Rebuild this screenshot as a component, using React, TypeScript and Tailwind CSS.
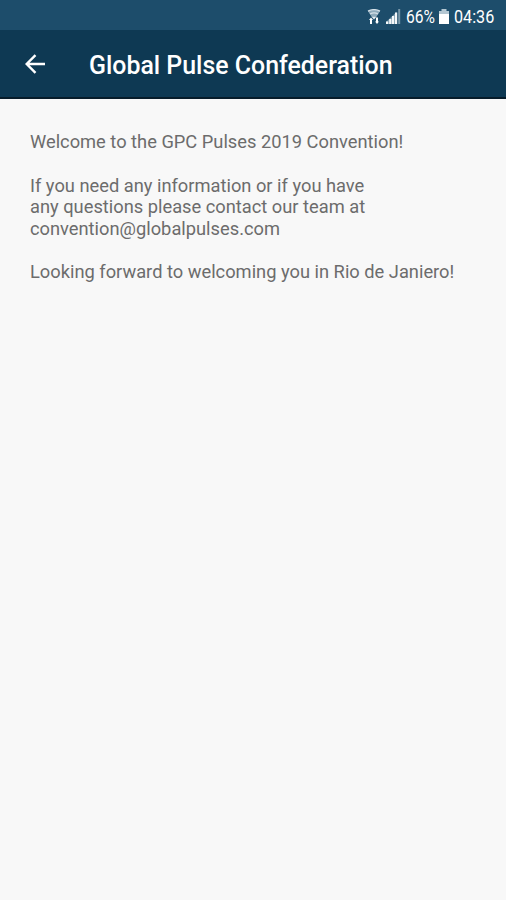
import React from 'react';

const paragraphs = [
    ['Welcome to the GPC Pulses 2019 Convention!'],
    [
        'If you need any information or if you have',
        'any questions please contact our team at',
        'convention@globalpulses.com',
    ],
    ['Looking forward to welcoming you in Rio de Janiero!'],
];

function WifiIcon() {
    return (
        <svg width="14" height="16" viewBox="0 0 14 16" fill="none">
            <path d="M1 2.2C4.5.4 9.5.4 13 2.2L9.5 7.5h-5Z" fill="#8fabbc" />
            <path d="M1 2.2C4.5.4 9.5.4 13 2.2M3 5c2.4-1.3 5.6-1.3 8 0" stroke="#d5e1e9" strokeWidth="1.4" />
            <path d="M4.4 7.5h5.2L7 10.5Z" fill="#e6eef3" />
            <path d="M2 11 4 8.5 6 11H5v4H3v-4ZM8 12.5 10 15l2-2.5h-1v-4H9v4Z" fill="#fff" />
        </svg>
    );
}

function SignalIcon() {
    return (
        <svg width="15" height="15" viewBox="0 0 15 15">
            <path d="M0 15v-2L10.5 3v12z" fill="#7898aa" />
            <path d="M0 12.5h2.2V15H0zM3.2 10h2.2v5H3.2zM6 7h2.2v8H6zM9 3.5h2.2V15H9z" fill="#f4f7f9" />
            <path d="M12.2 0h2v15h-2z" fill="#7898aa" />
        </svg>
    );
}

function BatteryIcon() {
    return (
        <svg width="10" height="15" viewBox="0 0 10 15">
            <path d="M2.5 0h5v2H10v3H0V2h2.5z" fill="#b4c7d2" />
            <path d="M0 5h10v10H0z" fill="#fff" />
        </svg>
    );
}

function StatusBar() {
    return (
        <div className="flex h-[30px] items-center justify-end bg-[#1d4d6b] pt-[3px] pr-[12px] text-[19px] text-white">
            <WifiIcon />
            <div className="ml-[5px]">
                <SignalIcon />
            </div>
            <span className="ml-[5px] w-[30px] pt-px whitespace-nowrap">
                <span className="inline-block origin-left scale-x-[0.82]">66%</span>
            </span>
            <div className="ml-[3px]">
                <BatteryIcon />
            </div>
            <span className="ml-[5px] w-[40px] pt-px whitespace-nowrap">
                <span className="inline-block origin-left scale-x-[0.85]">04:36</span>
            </span>
        </div>
    );
}

function TopBar() {
    return (
        <header className="flex h-[69px] items-center border-b-2 border-[#071c2a] bg-[#0e3953] pl-[25px] text-white">
            <button type="button" aria-label="Back">
                <svg width="21" height="20" viewBox="0 0 21 20" fill="none" stroke="currentColor" strokeWidth="2.4">
                    <path d="M20 10H2M10.5 1.2 1.7 10l8.8 8.8" />
                </svg>
            </button>
            <h1 className="ml-[43px] pt-1 text-[24.9px] leading-[30px] font-medium whitespace-nowrap">
                Global Pulse Confederation
            </h1>
        </header>
    );
}

export default function App() {
    return (
        <div className="flex h-screen flex-col overflow-hidden bg-[#f8f8f8] font-[Roboto,sans-serif]">
            <StatusBar />
            <TopBar />
            <main className="flex flex-1 flex-col gap-[21.6px] px-[30px] pt-[32.4px] text-[18.3px] leading-[21.6px] text-[#6c6c6c]">
                {paragraphs.map((lines) => (
                    <p key={lines[0]}>
                        {lines.map((line) => (
                            <span key={line} className="block whitespace-nowrap">
                                {line}
                            </span>
                        ))}
                    </p>
                ))}
            </main>
        </div>
    );
}
